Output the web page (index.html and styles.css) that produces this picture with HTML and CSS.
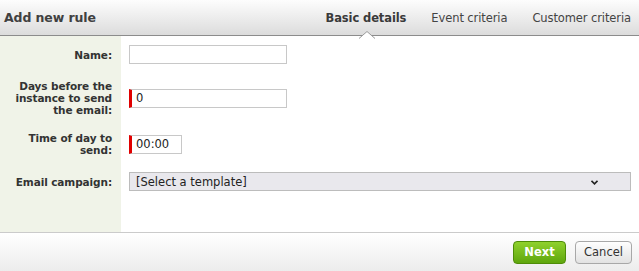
FILE: index.html
```html
<!DOCTYPE html>
<html lang="en">
<head>
    <meta charset="UTF-8">
    <title>Add new rule</title>
    <link rel="stylesheet" href="styles.css">
</head>
<body>
    <div class="dialog">
        <div class="header">
            <h1>Add new rule</h1>
            <div class="tabs">
                <span class="tab active">Basic details
                    <svg class="caret" width="16" height="8" viewBox="0 0 16 8"><path d="M0 7.5 L8 0.5 L16 7.5" fill="#fff" stroke="#9a9a9a" stroke-width="1"/><rect x="1" y="7" width="14" height="1" fill="#fff"/></svg>
                </span>
                <span class="tab">Event criteria</span>
                <span class="tab">Customer criteria</span>
            </div>
        </div>

        <div class="form">
            <div class="row">
                <label for="name">Name:</label>
                <input type="text" id="name" class="field">
            </div>
            <div class="row">
                <label for="days">Days before the instance to send the email:</label>
                <input type="text" id="days" class="field required" value="0">
            </div>
            <div class="row">
                <label for="time">Time of day to send:</label>
                <input type="text" id="time" class="field required short" value="00:00">
            </div>
            <div class="row">
                <label for="campaign">Email campaign:</label>
                <div class="select-wrap">
                    <select id="campaign">
                        <option>[Select a template]</option>
                    </select>
                    <svg class="chevron" width="7" height="5" viewBox="0 0 7 5"><path d="M0.5 0.8 L3.5 3.8 L6.5 0.8" fill="none" stroke="#222" stroke-width="1.6"/></svg>
                </div>
            </div>
        </div>

        <div class="footer">
            <button class="btn next">Next</button>
            <button class="btn cancel">Cancel</button>
        </div>
    </div>
</body>
</html>
```

FILE: styles.css
```css
* {
    margin: 0;
    padding: 0;
    box-sizing: border-box;
    font-family: 'DejaVu Sans', Verdana, sans-serif;
}

body {
    width: 639px;
    height: 271px;
    background: #fff;
}

.dialog {
    display: flex;
    flex-direction: column;
    height: 271px;
}

.header {
    height: 36px;
    display: flex;
    align-items: center;
    justify-content: space-between;
    background: linear-gradient(#fdfdfd, #dcdcdc);
    border-bottom: 1px solid #8c8c8c;
    padding: 0 8px 0 4px;
}

h1 {
    font-size: 12.5px;
    font-weight: bold;
    color: #404040;
    letter-spacing: -0.1px;
}

.tabs {
    display: flex;
    gap: 25px;
    padding-top: 1px;
}

.tab {
    position: relative;
    font-size: 11.5px;
    color: #444;
    letter-spacing: -0.1px;
}

.tab.active {
    font-weight: bold;
    color: #3a3a3a;
    letter-spacing: -0.1px;
}

.caret {
    position: absolute;
    left: 33px;
    top: 20px;
}

.form {
    flex: 1;
    display: flex;
    flex-direction: column;
    gap: 16px;
    padding-top: 9px;
    background: linear-gradient(to right, #f0f3e8 121px, #fff 121px);
}

.row {
    display: flex;
    align-items: center;
}

label {
    width: 121px;
    flex-shrink: 0;
    padding: 0 9px 0 12px;
    text-align: right;
    font-size: 10.5px;
    line-height: 12px;
    font-weight: bold;
    color: #333;
    letter-spacing: -0.1px;
}

.field {
    margin-left: 8px;
    width: 158px;
    height: 19px;
    border: 1px solid #c8c8c8;
    padding: 0 4px;
    font-size: 11.5px;
    color: #222;
    outline: none;
}

.field.required {
    border-left: 3px solid #e00000;
}

.field.short {
    width: 53px;
}

.select-wrap {
    position: relative;
    margin-left: 8px;
    width: 502px;
    height: 19px;
}

select {
    appearance: none;
    display: block;
    width: 100%;
    height: 19px;
    border: 1px solid #bcbcbc;
    border-radius: 0;
    background: #e9e8ed;
    padding: 0 6px;
    font-size: 11.5px;
    color: #222;
    outline: none;
}

.chevron {
    position: absolute;
    right: 33px;
    top: 8px;
}

.footer {
    height: 39px;
    display: flex;
    align-items: center;
    justify-content: flex-end;
    gap: 9px;
    padding: 0 7px 0 0;
    border-top: 1px solid #cbcbcb;
    background: linear-gradient(#fff, #ececec);
}

.btn {
    height: 23px;
    border-radius: 4px;
    font-size: 11.5px;
    cursor: pointer;
}

.next {
    width: 53px;
    border: 1px solid #4e8c08;
    background: linear-gradient(#8fd12c, #5fa60e);
    color: #fff;
    font-weight: bold;
}

.cancel {
    width: 57px;
    border: 1px solid #a8a8a8;
    background: linear-gradient(#fefefe, #e2e2e2);
    color: #333;
}
```
